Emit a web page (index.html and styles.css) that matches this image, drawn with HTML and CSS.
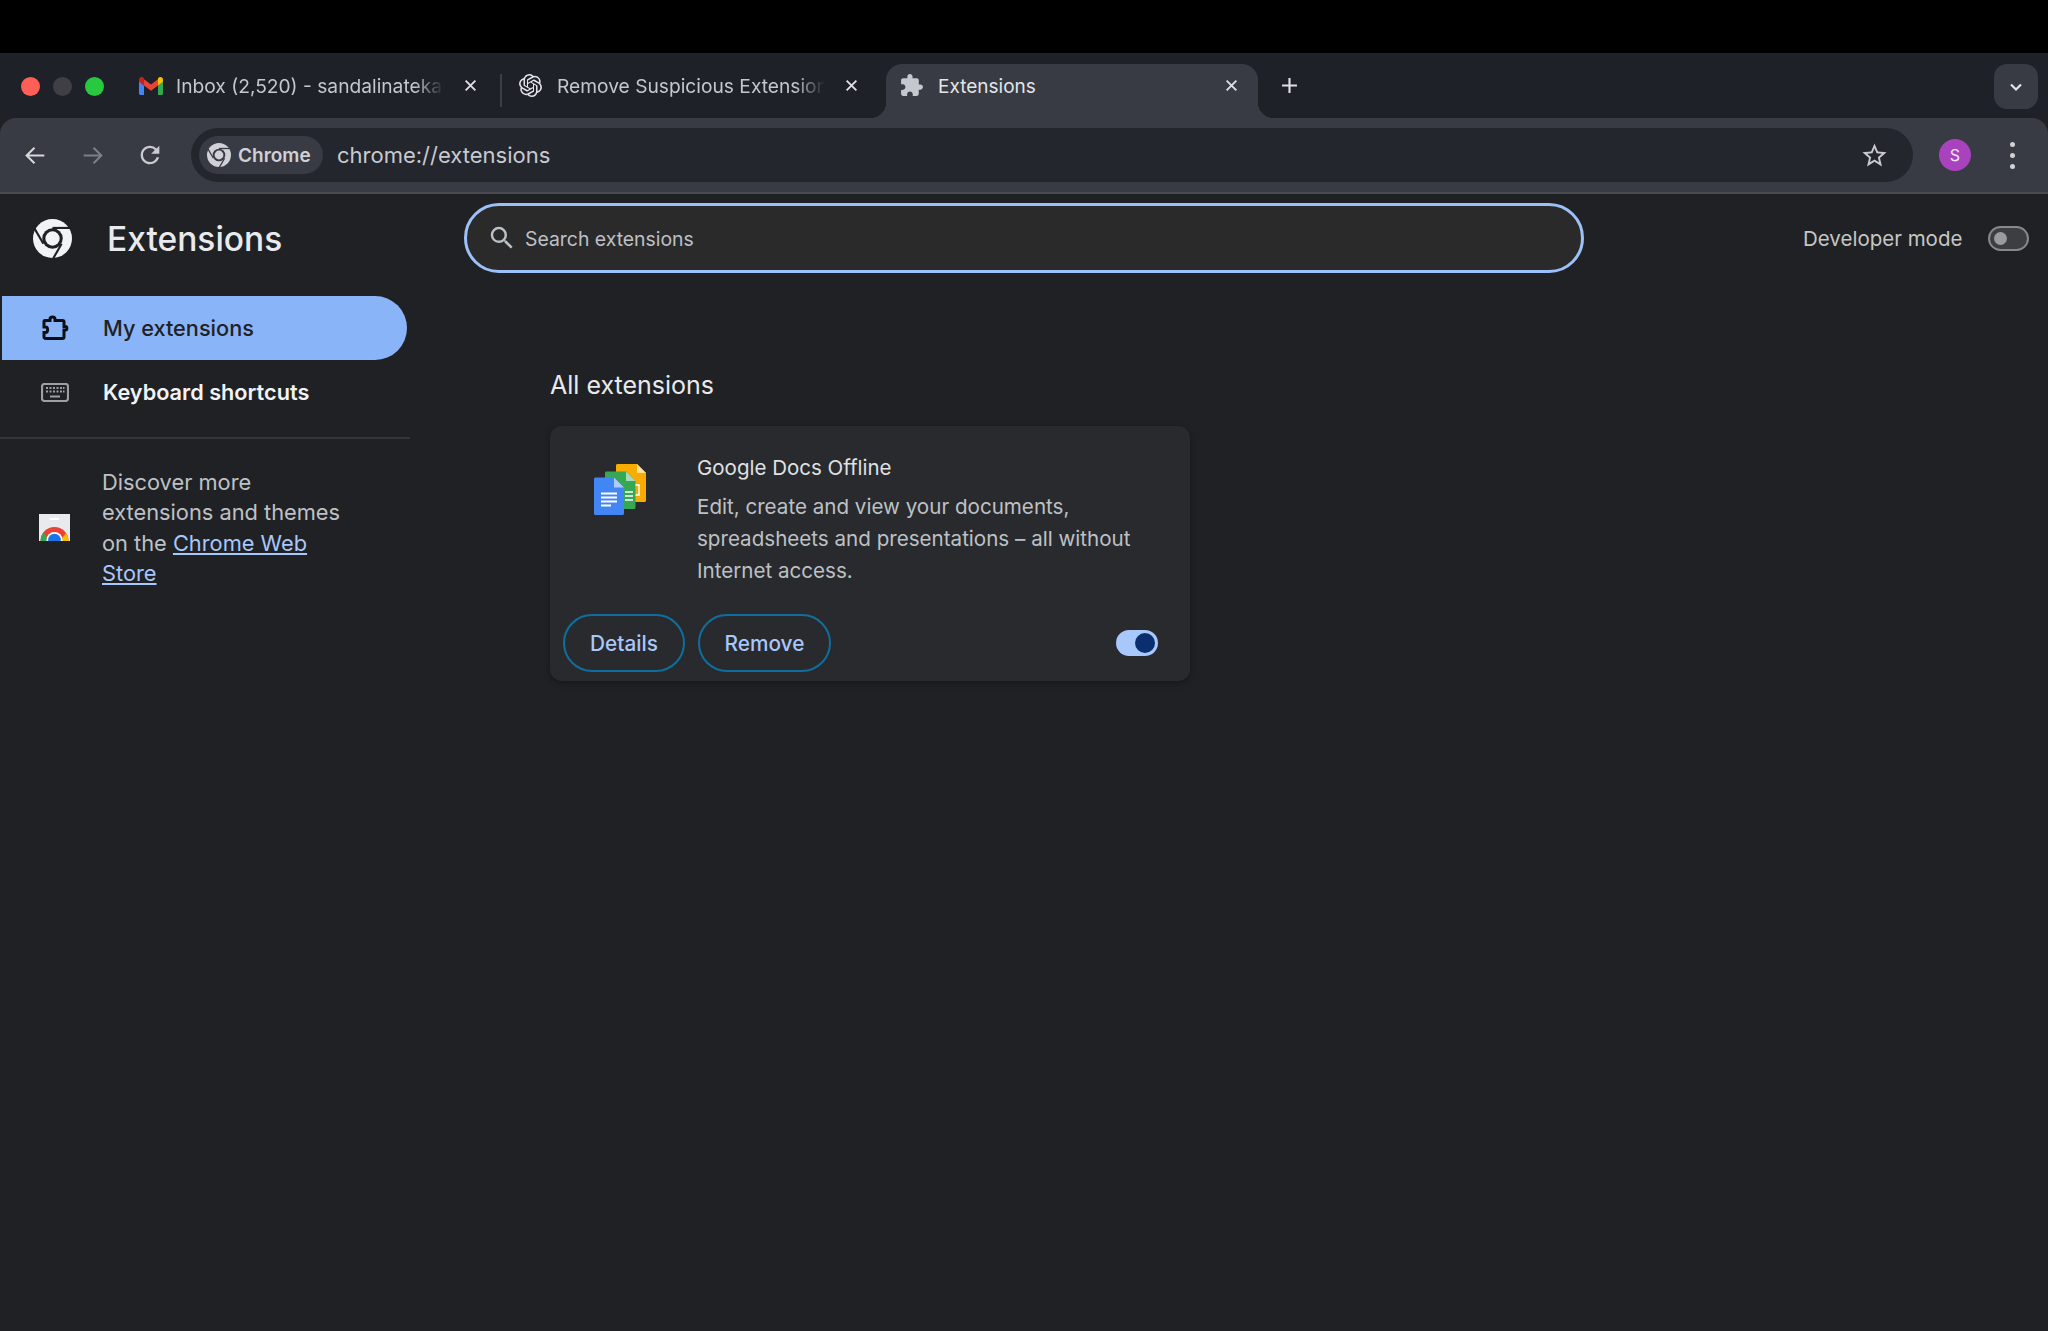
FILE: index.html
```html
<!DOCTYPE html>
<html>

<head>
  <title>Extensions</title>
  <link rel="stylesheet" href="styles.css">
</head>

<body>
  <div class="menu-black"></div>

  <div class="tabstrip">
    <div class="traffic">
      <span class="light red"></span>
      <span class="light gray"></span>
      <span class="light green"></span>
    </div>

    <div class="tab tab-first">
      <svg class="favicon" viewBox="0 0 24 18">
        <path fill="#4285f4" d="M0 3v13.5C0 17.3.7 18 1.5 18H5V8.5z"/>
        <path fill="#34a853" d="M24 3v13.5c0 .8-.7 1.500-1.500 1.500H19V8.500z"/>
        <path fill="#ea4335" d="M5 8.500 12 13.700l7-5.200V2.300L12 7.500 5 2.300z"/>
        <path fill="#c5221f" d="M0 2.600C0 .5 2.400-.7 4 .5l1 .8v7.200L0 4.800z"/>
        <path fill="#fbbc04" d="M24 2.600C24 .5 21.600-.7 20 .5l-1 .8v7.200l5-3.700z"/>
      </svg>
      <span class="tab-title">Inbox (2,520) - sandalinatekar</span>
      <svg class="tab-close" viewBox="0 0 12 12"><path d="M1.500 1.500l9 9M10.500 1.500l-9 9"/></svg>
    </div>
    <span class="tab-sep"></span>
    <div class="tab tab-second">
      <svg class="favicon openai" viewBox="0 0 24 24">
        <path d="M22.2819 9.8211a5.9847 5.9847 0 0 0-.5157-4.9108 6.0462 6.0462 0 0 0-6.5098-2.9A6.0651 6.0651 0 0 0 4.9807 4.1818a5.9847 5.9847 0 0 0-3.9977 2.9 6.0462 6.0462 0 0 0 .7427 7.0966 5.98 5.98 0 0 0 .511 4.9107 6.051 6.051 0 0 0 6.5146 2.9001A5.9847 5.9847 0 0 0 13.2599 24a6.0557 6.0557 0 0 0 5.7718-4.2058 5.9894 5.9894 0 0 0 3.9977-2.9001 6.0557 6.0557 0 0 0-.7475-7.0729zm-9.022 12.6081a4.4755 4.4755 0 0 1-2.8764-1.0408l.1419-.0804 4.7783-2.7582a.7948.7948 0 0 0 .3927-.6813v-6.7369l2.02 1.1686a.071.071 0 0 1 .038.052v5.5826a4.504 4.504 0 0 1-4.4945 4.4944zm-9.6607-4.1254a4.4708 4.4708 0 0 1-.5346-3.0137l.142.0852 4.783 2.7582a.7712.7712 0 0 0 .7806 0l5.8428-3.3685v2.3324a.0804.0804 0 0 1-.0332.0615L9.74 19.9502a4.4992 4.4992 0 0 1-6.1408-1.6464zM2.3408 7.8956a4.485 4.485 0 0 1 2.3655-1.9728V11.6a.7664.7664 0 0 0 .3879.6765l5.8144 3.3543-2.0201 1.1685a.0757.0757 0 0 1-.071 0l-4.8303-2.7865A4.504 4.504 0 0 1 2.3408 7.872zm16.5963 3.8558L13.1038 8.364 15.1192 7.2a.0757.0757 0 0 1 .071 0l4.8303 2.7913a4.4944 4.4944 0 0 1-.6765 8.1042v-5.6772a.79.79 0 0 0-.407-.667zm2.0107-3.0231l-.142-.0852-4.7735-2.7818a.7759.7759 0 0 0-.7854 0L9.409 9.2297V6.8974a.0662.0662 0 0 1 .0284-.0615l4.8303-2.7866a4.4992 4.4992 0 0 1 6.6802 4.66zM8.3065 12.863l-2.02-1.1638a.0804.0804 0 0 1-.038-.0567V6.0742a4.4992 4.4992 0 0 1 7.3757-3.4537l-.142.0805L8.704 5.459a.7948.7948 0 0 0-.3927.6813zm1.0976-2.3654l2.602-1.4998 2.6069 1.4998v2.9994l-2.5974 1.4997-2.6067-1.4997Z"/>
      </svg>
      <span class="tab-title">Remove Suspicious Extensions</span>
      <svg class="tab-close" viewBox="0 0 12 12"><path d="M1.500 1.500l9 9M10.500 1.500l-9 9"/></svg>
    </div>
    <div class="tab tab-active">
      <svg class="favicon puzzle" viewBox="0 0 24 24">
        <path d="M20.500 11H19V7c0-1.100-.9-2-2-2h-4V3.500C13 2.120 11.880 1 10.500 1S8 2.120 8 3.500V5H4c-1.100 0-1.990.9-1.990 2v3.800H3.500c1.490 0 2.700 1.210 2.700 2.700s-1.210 2.700-2.700 2.700H2V20c0 1.100.9 2 2 2h3.800v-1.500c0-1.490 1.210-2.700 2.700-2.700 1.490 0 2.700 1.210 2.700 2.700V22H17c1.100 0 2-.9 2-2v-4h1.500c1.380 0 2.500-1.120 2.500-2.500S21.880 11 20.500 11z"/>
      </svg>
      <span class="tab-title">Extensions</span>
      <svg class="tab-close" viewBox="0 0 12 12"><path d="M1.500 1.500l9 9M10.500 1.500l-9 9"/></svg>
    </div>
    <svg class="new-tab" viewBox="0 0 16 16"><path d="M8 1v14M1 8h14"/></svg>
    <div class="tab-search">
      <svg viewBox="0 0 14 10"><path d="M2 2.500l5 5 5-5"/></svg>
    </div>
  </div>

  <div class="toolbar">
    <svg class="nav-icon" viewBox="0 0 24 24"><path d="M20.500 12H4M11 4.500 3.500 12l7.500 7.500"/></svg>
    <svg class="nav-icon nav-off" viewBox="0 0 24 24"><path d="M3.500 12H20M13 4.500l7.500 7.500-7.500 7.500"/></svg>
    <svg class="nav-icon nav-reload" viewBox="0 0 24 24"><path d="M17.650 6.350A7.958 7.958 0 0 0 12 4c-4.420 0-7.990 3.580-7.990 8s3.570 8 7.990 8c3.730 0 6.840-2.550 7.730-6h-2.080A5.990 5.990 0 0 1 12 18c-3.310 0-6-2.690-6-6s2.690-6 6-6c1.660 0 3.140.69 4.220 1.780L13 11h7V4l-2.350 2.350z"/></svg>

    <div class="omnibox">
      <div class="chip">
        <svg class="chrome-mark chip-mark" viewBox="0 0 24 24">
          <circle class="mark-body" cx="12" cy="12" r="12"/>
          <circle class="mark-gap" cx="12" cy="12" r="6.300"/>
          <circle class="mark-body" cx="12" cy="12" r="4.400"/>
          <path class="mark-cut" d="M12 5.500H24"/>
          <path class="mark-cut" d="M12 5.500H24" transform="rotate(120 12 12)"/>
          <path class="mark-cut" d="M12 5.500H24" transform="rotate(240 12 12)"/>
        </svg>
        <span>Chrome</span>
      </div>
      <span class="url">chrome://extensions</span>
      <svg class="star" viewBox="0 0 24 24"><path d="M22 9.240l-7.190-.62L12 2 9.190 8.630 2 9.240l5.460 4.730L5.820 21 12 17.270 18.180 21l-1.630-7.030L22 9.240zM12 15.400l-3.760 2.270 1-4.280-3.320-2.880 4.380-.38L12 6.100l1.710 4.040 4.380.38-3.320 2.880 1 4.280L12 15.400z"/></svg>
    </div>

    <div class="avatar">S</div>
    <div class="dots"><span></span><span></span><span></span></div>
  </div>

  <div class="page">
    <div class="page-header">
      <div class="brand">
        <svg class="chrome-mark brand-mark" viewBox="0 0 24 24">
          <circle class="mark-body" cx="12" cy="12" r="12"/>
          <circle class="mark-gap" cx="12" cy="12" r="6.300"/>
          <circle class="mark-body" cx="12" cy="12" r="4.400"/>
          <path class="mark-cut" d="M12 5.500H24"/>
          <path class="mark-cut" d="M12 5.500H24" transform="rotate(120 12 12)"/>
          <path class="mark-cut" d="M12 5.500H24" transform="rotate(240 12 12)"/>
        </svg>
        <h1>Extensions</h1>
      </div>
      <div class="search">
        <svg viewBox="0 0 24 24"><path d="M15.500 14h-.79l-.28-.27A6.471 6.471 0 0 0 16 9.500 6.500 6.500 0 1 0 9.500 16c1.610 0 3.090-.59 4.230-1.570l.27.28v.79l5 4.990L20.490 19l-4.990-5zm-6 0C7.010 14 5 11.990 5 9.500S7.010 5 9.500 5 14 7.010 14 9.500 11.990 14 9.500 14z"/></svg>
        <span>Search extensions</span>
      </div>
      <div class="dev-mode">
        <span>Developer mode</span>
        <div class="dev-toggle"><span></span></div>
      </div>
    </div>

    <div class="page-body">
      <div class="sidebar">
        <div class="nav-item nav-active">
          <svg class="nav-svg" viewBox="0 0 28 28">
            <path d="M4 6.500h5V5.200c0-3 5-3 5 0v1.300h7.500c.8 0 1.500.7 1.500 1.500v4.500h1.500c1.800 0 1.800 3.500 0 3.500H23V23c0 .8-.7 1.500-1.500 1.500H4.500C3.700 24.500 3 23.800 3 23v-4.500h1.500c2.800 0 2.800-5.500 0-5.500H3V7.500c0-.6.4-1 1-1z"/>
          </svg>
          <span>My extensions</span>
        </div>
        <div class="nav-item">
          <svg class="nav-svg kb" viewBox="0 0 28 19">
            <rect x="1" y="1" width="26" height="17" rx="2.500"/>
            <path d="M5 5h2M8.500 5h2M12 5h2M15.500 5h2M19 5h2M22 5h1.500M5 8.500h2M8.500 8.500h2M12 8.500h2M15.500 8.500h2M19 8.500h2M22 8.500h1.500M9 13.500h10"/>
          </svg>
          <span>Keyboard shortcuts</span>
        </div>
        <div class="side-rule"></div>
        <div class="discover">
          <svg class="store" viewBox="0 0 31 27">
            <rect width="31" height="27" fill="#e8eaed"/>
            <rect x="11" y="4" width="9" height="2" fill="#fff"/>
            <path fill="#ea4335" d="M1.500 27a14 14 0 0 1 28 0z"/>
            <path fill="#34a853" d="M1.500 27a14 14 0 0 1 3-8.700L10 27z"/>
            <path fill="#fbbc04" d="M29.500 27a14 14 0 0 0-2.500-8l-6 8z"/>
            <circle cx="15.500" cy="26" r="8" fill="#fff"/>
            <circle cx="15.500" cy="26" r="6.300" fill="#1a73e8"/>
            <rect y="27" width="31" height="8" fill="#202124"/>
          </svg>
          <p>Discover more extensions and themes on the <a href="#">Chrome Web Store</a></p>
        </div>
      </div>

      <div class="main">
        <h2>All extensions</h2>
        <div class="card">
          <div class="card-top">
            <svg class="docs" viewBox="0 0 52 51">
              <path fill="#f9ab00" d="M22 1.500c0-.8.700-1.500 1.500-1.500H43l9 9v27.500c0 .8-.7 1.500-1.500 1.500h-27c-.8 0-1.500-.7-1.500-1.500z"/>
              <path fill="#fde293" d="M43 0l9 9h-9z"/>
              <path fill="#34a853" d="M11 9c0-.8.700-1.500 1.500-1.500H32l9.500 9.500v26.500c0 .8-.7 1.500-1.500 1.500H12.500c-.8 0-1.500-.7-1.500-1.500z"/>
              <path fill="#a8dab5" d="M32 7.500l9.500 9.500H32z"/>
              <path fill="none" stroke="#fff" stroke-width="1.500" d="M41.500 21h3.500v10h-3.500M31 28h8M31 32h8M31 36h8"/>
              <path fill="#4285f4" d="M0 15c0-.8.700-1.500 1.500-1.500H20l10 10V49.500c0 .8-.7 1.500-1.500 1.500H1.500C.7 51 0 50.300 0 49.500z"/>
              <path fill="#aecbfa" d="M20 13.500l10 10H20z"/>
              <path fill="none" stroke="#fff" stroke-width="1.800" d="M7 29.500h16M7 33.500h16M7 37.500h16M7 41.500h10"/>
            </svg>
            <div class="card-text">
              <div class="ext-name">Google Docs Offline</div>
              <div class="ext-desc">Edit, create and view your documents, spreadsheets and presentations – all without Internet access.</div>
            </div>
          </div>
          <div class="card-bottom">
            <button class="pill btn-details">Details</button>
            <button class="pill btn-remove">Remove</button>
            <div class="ext-toggle"><span></span></div>
          </div>
        </div>
      </div>
    </div>
  </div>
</body>

</html>
```

FILE: styles.css
```css
* {
  box-sizing: border-box;
}

html,
body {
  margin: 0;
  padding: 0;
  height: 1331px;
  overflow: hidden;
}

body {
  font-family: 'Inter', 'Liberation Sans', sans-serif;
  background-color: #202124;
  color: #e8eaed;
}

.menu-black {
  height: 53px;
  background-color: #000;
}

/* tab strip */
.tabstrip {
  height: 65px;
  padding-top: 11px;
  display: flex;
  background-color: #1e2128;
}

.traffic {
  width: 126px;
  height: 43px;
  padding-left: 21px;
  display: flex;
  align-items: center;
  gap: 13px;
  margin-top: 1px;
}

.light {
  width: 19px;
  height: 19px;
  border-radius: 50%;
}

.red {
  background-color: #ff5f57;
}

.gray {
  background-color: #3e4045;
}

.green {
  background-color: #28c840;
}

.tab {
  height: 54px;
  padding-bottom: 11px;
  display: flex;
  align-items: center;
  font-size: 19.200px;
  color: #c4c7cd;
}

.tab-first {
  width: 374px;
  padding-left: 13px;
  padding-right: 23px;
}

.tab-second {
  width: 380px;
  padding-left: 13px;
  padding-right: 28px;
}

.tab-sep {
  width: 2px;
  height: 33px;
  margin-top: 10px;
  margin-right: 4px;
  background-color: #3c3f46;
}

.tab-active {
  position: relative;
  width: 372px;
  padding-left: 13px;
  padding-right: 20px;
  background-color: #383b43;
  border-radius: 16px 16px 0 0;
  color: #e3e5e9;
  font-size: 19px;
}

.tab-active::before,
.tab-active::after {
  content: "";
  position: absolute;
  bottom: 0;
  width: 16px;
  height: 16px;
}

.tab-active::before {
  left: -16px;
  background: radial-gradient(circle at 0 0, transparent 16px, #383b43 16.500px);
}

.tab-active::after {
  right: -16px;
  background: radial-gradient(circle at 100% 0, transparent 16px, #383b43 16.500px);
}

.favicon {
  width: 24px;
  height: 18px;
  flex: none;
  margin-right: 13px;
}

.openai {
  width: 23px;
  height: 23px;
  margin-right: 15px;
  fill: #e3e5e9;
}

.puzzle {
  width: 25px;
  height: 25px;
  margin-right: 14px;
  fill: #c4c7cd;
}

.tab-title {
  flex: 1;
  min-width: 0;
  padding-top: 1px;
  white-space: nowrap;
  overflow: hidden;
  -webkit-mask-image: linear-gradient(to left, transparent 0, #000 30px);
  mask-image: linear-gradient(to left, transparent 0, #000 30px);
}

.tab-active .tab-title {
  -webkit-mask-image: none;
  mask-image: none;
}

.tab-close {
  width: 13px;
  height: 13px;
  flex: none;
  fill: none;
  stroke: #dfe1e5;
  stroke-width: 1.700;
  margin-left: 20px;
}

.new-tab {
  width: 17px;
  height: 17px;
  margin-left: 23px;
  margin-top: 13px;
  fill: none;
  stroke: #dfe1e5;
  stroke-width: 2;
}

.tab-search {
  width: 44px;
  height: 45px;
  margin-left: auto;
  margin-right: 10px;
  border-radius: 13px;
  background-color: #383b43;
  display: flex;
  align-items: center;
  justify-content: center;
}

.tab-search svg {
  width: 14px;
  height: 10px;
  fill: none;
  stroke: #e3e5e9;
  stroke-width: 2.200;
}

/* toolbar */
.toolbar {
  height: 76px;
  padding: 10px 0 10px 23px;
  display: flex;
  align-items: center;
  background-color: #383b43;
  border-radius: 16px 16px 0 0;
  border-bottom: 2px solid #4a4b4e;
}

.nav-icon {
  width: 25px;
  height: 25px;
  flex: none;
  fill: none;
  stroke: #d5d7dc;
  stroke-width: 2;
  margin-right: 32px;
}

.nav-off {
  stroke: #7d7f85;
}

.nav-reload {
  fill: #c9cbd0;
  stroke: none;
  width: 28px;
  height: 28px;
  margin-left: -1px;
  margin-right: 0;
}

.omnibox {
  width: 1722px;
  height: 54px;
  margin-left: 27px;
  padding: 0 24px 0 8px;
  display: flex;
  align-items: center;
  background-color: #23262d;
  border-radius: 27px;
}

.chip {
  width: 124px;
  height: 38px;
  display: flex;
  align-items: center;
  padding-left: 8px;
  gap: 7px;
  border-radius: 19px;
  background-color: #383b43;
  font-size: 19px;
  font-weight: 600;
  color: #cfd1d6;
}

.chrome-mark .mark-body {
  fill: #cfd1d6;
}

.chrome-mark .mark-gap {
  fill: #383b43;
}

.chrome-mark .mark-cut {
  stroke: #383b43;
  stroke-width: 1.300;
  fill: none;
}

.chip-mark {
  width: 24px;
  height: 24px;
  flex: none;
}

.url {
  margin-left: 14px;
  font-size: 22px;
  color: #c8cacf;
}

.star {
  width: 29px;
  height: 29px;
  margin-left: auto;
  fill: #c8cacf;
}

.avatar {
  width: 32px;
  height: 32px;
  margin-left: 26px;
  border-radius: 50%;
  background-color: #a942bd;
  color: #f3e5f5;
  font-size: 16px;
  display: flex;
  align-items: center;
  justify-content: center;
}

.dots {
  margin-left: 39px;
  display: flex;
  flex-direction: column;
  gap: 6px;
}

.dots span {
  width: 5px;
  height: 5px;
  border-radius: 50%;
  background-color: #d0d2d6;
}

/* page header */
.page-header {
  height: 88px;
  display: flex;
  align-items: center;
}

.brand {
  width: 464px;
  padding-left: 33px;
  display: flex;
  align-items: center;
}

.brand-mark {
  width: 39px;
  height: 39px;
  flex: none;
}

.brand-mark .mark-body {
  fill: #f1f3f4;
}

.brand-mark .mark-gap {
  fill: #202124;
}

.brand-mark .mark-cut {
  fill: none;
  stroke: #202124;
}

h1 {
  margin: 2px 0 0 35px;
  font-size: 33.500px;
  font-weight: 500;
  color: #e8eaed;
}

.search {
  width: 1120px;
  height: 70px;
  padding-left: 20px;
  display: flex;
  align-items: center;
  gap: 8px;
  border: 3.500px solid #9cc0f8;
  border-radius: 35px;
  background-color: #2a2a2a;
  font-size: 19.400px;
  color: #bdc1c6;
}

.search span {
  padding-top: 2px;
}

.search svg {
  width: 30px;
  height: 30px;
  fill: #bdc1c6;
}

.dev-mode {
  flex: 1;
  padding-left: 219px;
  display: flex;
  align-items: center;
  font-size: 20.500px;
  color: #c4c7c5;
  white-space: nowrap;
}

.dev-toggle {
  width: 41px;
  height: 25px;
  margin-left: 26px;
  flex: none;
  padding-left: 4px;
  display: flex;
  align-items: center;
  border: 2px solid #86888a;
  border-radius: 13px;
  background-color: #3c3f41;
}

.dev-toggle span {
  width: 13px;
  height: 13px;
  border-radius: 50%;
  background-color: #9a9b9c;
}

/* sidebar */
.page-body {
  display: flex;
}

.sidebar {
  width: 410px;
  flex: none;
  padding-top: 14px;
}

.nav-item {
  width: 405px;
  height: 64px;
  margin-left: 2px;
  padding-left: 39px;
  display: flex;
  align-items: center;
  font-size: 21.700px;
  font-weight: 600;
  color: #f1f3f4;
  border-radius: 0 32px 32px 0;
}

.nav-active {
  background-color: #8ab4f8;
  color: #202124;
  font-weight: 500;
}

.nav-svg {
  width: 28px;
  height: 28px;
  flex: none;
  margin-right: 34px;
  fill: none;
  stroke: #0b0e14;
  stroke-width: 3;
}

.kb {
  height: 19px;
  stroke: #9aa0a6;
  stroke-width: 2.200;
}

.side-rule {
  height: 2px;
  margin-top: 13px;
  background-color: #33353a;
}

.discover {
  height: 177px;
  padding-left: 39px;
  display: flex;
  align-items: center;
}

.store {
  width: 31px;
  height: 27px;
  flex: none;
  margin-right: 32px;
}

.discover p {
  width: 250px;
  margin: 0;
  font-size: 21.800px;
  line-height: 30.500px;
  color: #bdc1c6;
}

.discover a {
  color: #a8c7fa;
}

/* main list */
.main {
  flex: 1;
  padding-left: 140px;
}

h2 {
  margin: 0;
  padding-top: 87px;
  height: 144px;
  font-size: 25px;
  line-height: 32px;
  font-weight: 400;
  color: #e8eaed;
}

.card {
  width: 640px;
  height: 255px;
  padding: 13px 32px 9px 13px;
  display: flex;
  flex-direction: column;
  justify-content: space-between;
  background-color: #292a2d;
  border-radius: 12px;
  box-shadow: 0 2px 6px rgba(0, 0, 0, 0.3);
}

.card-top {
  display: flex;
}

.docs {
  width: 52px;
  height: 51px;
  flex: none;
  margin: 25px 51px 0 31px;
}

.card-text {
  flex: 1;
  margin-right: -16px;
}

.ext-name {
  font-size: 20.500px;
  line-height: 32px;
  margin-top: 13px;
  color: #dfe1e5;
}

.ext-desc {
  margin-top: 7px;
  font-size: 20.600px;
  line-height: 32px;
  color: #bdc1c6;
}

.card-bottom {
  display: flex;
  align-items: center;
}

.pill {
  height: 58px;
  padding: 0;
  border: 2px solid #0e6f9e;
  border-radius: 29px;
  background: transparent;
  font-family: 'Inter', 'Liberation Sans', sans-serif;
  font-size: 20.800px;
  font-weight: 500;
  color: #a8c7fa;
}

.btn-details {
  width: 122px;
  margin-right: 13px;
}

.btn-remove {
  width: 133px;
}

.ext-toggle {
  width: 42px;
  height: 26px;
  margin-left: auto;
  padding-right: 3px;
  display: flex;
  align-items: center;
  justify-content: flex-end;
  border-radius: 13px;
  background-color: #a8c7fa;
}

.ext-toggle span {
  width: 20px;
  height: 20px;
  border-radius: 50%;
  background-color: #0b2f6e;
}
```
